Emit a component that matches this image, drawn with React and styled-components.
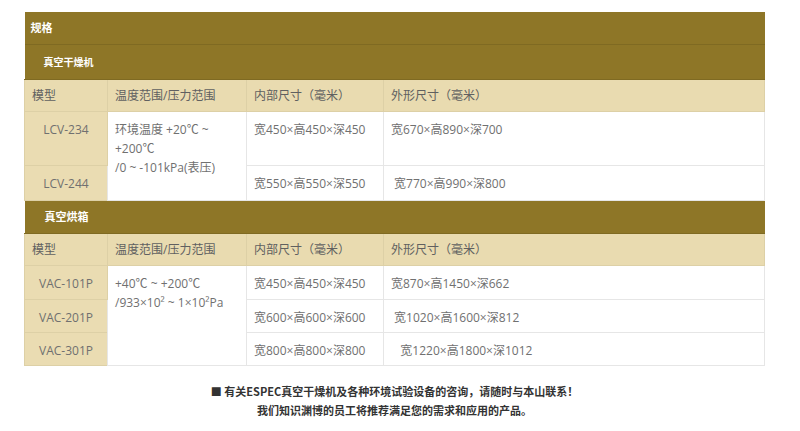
import React from "react";
import styled, { createGlobalStyle } from "styled-components";

const GlobalStyle = createGlobalStyle`
  body {
    margin: 0;
    padding: 0;
    background: #fff;
    font-family: "Open Sans", "Noto Sans CJK SC", sans-serif;
  }
`;

const dryers = [
  { model: "LCV-234", inner: "宽450×高450×深450", outer: "宽670×高890×深700", h: 54 },
  { model: "LCV-244", inner: "宽550×高550×深550", outer: "\u00a0宽770×高990×深800", h: 35 },
];

const ovens = [
  { model: "VAC-101P", inner: "宽450×高450×深450", outer: "宽870×高1450×深662", h: 34 },
  { model: "VAC-201P", inner: "宽600×高600×深600", outer: "\u00a0宽1020×高1600×深812", h: 33 },
  { model: "VAC-301P", inner: "宽800×高800×深800", outer: "\u00a0\u00a0\u00a0宽1220×高1800×深1012", h: 33 },
];

const HeadRow = () => (
  <Row $h={32}>
    <HeadCell>模型</HeadCell>
    <HeadCell>温度范围/压力范围</HeadCell>
    <HeadCell>内部尺寸（毫米）</HeadCell>
    <HeadCell>外形尺寸（毫米）</HeadCell>
  </Row>
);

const App = () => {
  return (
    <>
      <GlobalStyle />
      <Page>
        <SpecTable>
          <colgroup>
            <col style={{ width: 83 }} />
            <col style={{ width: 139 }} />
            <col style={{ width: 137 }} />
            <col />
          </colgroup>
          <tbody>
            <Row $h={32}>
              <SectionCell colSpan={4} $pad={6} $size={11}>规格</SectionCell>
            </Row>
            <Row $h={35}>
              <SectionCell colSpan={4} $pad={19} $size={10}>真空干燥机</SectionCell>
            </Row>
            <HeadRow />
            {dryers.map((r, i) => (
              <Row key={r.model} $h={r.h}>
                <ModelCell>{r.model}</ModelCell>
                {i === 0 && (
                  <Cell rowSpan={dryers.length}>
                    环境温度 +20℃ ~ +200℃
                    <br />
                    /0 ~ -101kPa(表压)
                  </Cell>
                )}
                <Cell>{r.inner}</Cell>
                <Cell>{r.outer}</Cell>
              </Row>
            ))}
            <Row $h={33}>
              <SectionCell colSpan={4} $pad={20} $size={11}>真空烘箱</SectionCell>
            </Row>
            <HeadRow />
            {ovens.map((r, i) => (
              <Row key={r.model} $h={r.h}>
                <ModelCell>{r.model}</ModelCell>
                {i === 0 && (
                  <Cell rowSpan={ovens.length}>
                    +40℃ ~ +200℃
                    <br />
                    /933×10² ~ 1×10²Pa
                  </Cell>
                )}
                <Cell>{r.inner}</Cell>
                <Cell>{r.outer}</Cell>
              </Row>
            ))}
          </tbody>
        </SpecTable>

        <Note>
          <p>■ 有关ESPEC真空干燥机及各种环境试验设备的咨询，请随时与本山联系！</p>
          <p>我们知识渊博的员工将推荐满足您的需求和应用的产品。</p>
        </Note>
      </Page>
    </>
  );
};

const Page = styled.div`
  padding: 12px 0 0 24px;
  width: 741px;
`;

const SpecTable = styled.table`
  width: 741px;
  border-collapse: collapse;
  table-layout: fixed;
  font-size: 12px;
  line-height: 19px;
  color: #707070;
`;

const Row = styled.tr`
  height: ${(p) => p.$h}px;
`;

const SectionCell = styled.td`
  background: #8e7627;
  color: #fff;
  font-weight: bold;
  font-family: "Noto Sans CJK SC", sans-serif;
  font-size: ${(p) => p.$size}px;
  padding: 0 0 0 ${(p) => p.$pad}px;
  border-bottom: 1px solid #7f6a22;
  vertical-align: middle;
`;

const HeadCell = styled.td`
  background: #e9dbb0;
  color: #606060;
  padding: 0 7px;
  vertical-align: middle;
  border: 1px solid #ddd0a6;
  border-top: none;
`;

const Cell = styled.td`
  background: #fff;
  padding: 8px 7px 0;
  vertical-align: top;
  border: 1px solid #e6e6e6;
`;

const ModelCell = styled(Cell)`
  background: #eadcb2;
  text-align: center;
  border-color: #ddd0a6;
`;

const Note = styled.div`
  margin-top: 16px;
  text-align: center;
  font-family: "Noto Sans CJK SC", sans-serif;
  font-weight: bold;
  font-size: 11px;
  line-height: 19px;
  color: #333;

  p {
    margin: 0;
  }
`;

export default App;
